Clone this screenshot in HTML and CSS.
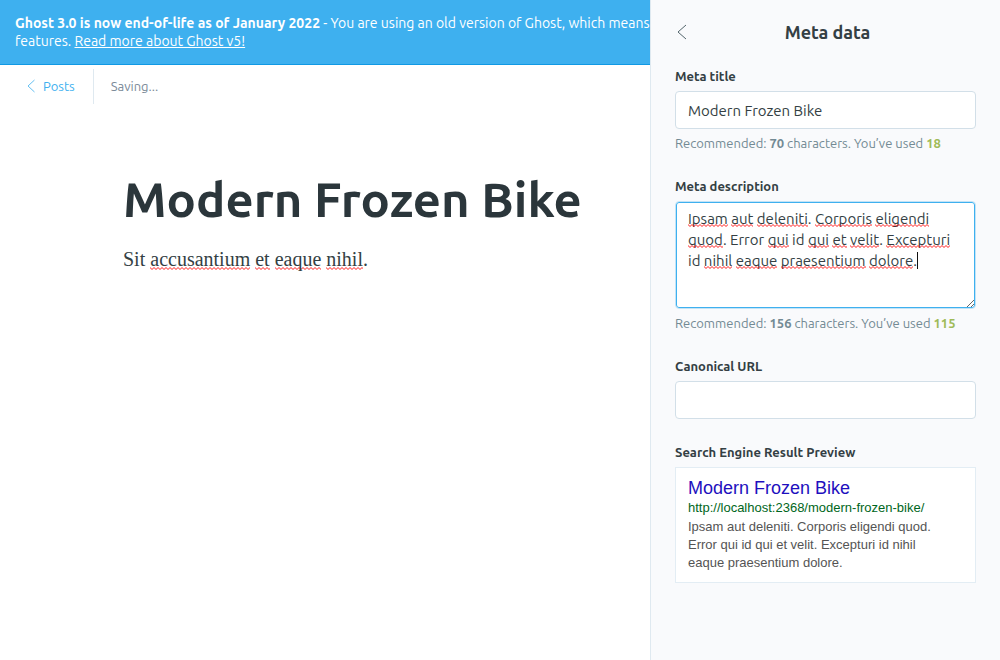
FILE: index.html
```html
<!DOCTYPE html>
<html lang="en">
<head>
<meta charset="utf-8">
<meta name="viewport" content="width=device-width, initial-scale=1">
<title>Modern Frozen Bike - Ghost</title>
<link rel="stylesheet" href="styles.css">
</head>
<body>
<div class="app">
  <aside class="banner"><strong>Ghost 3.0 is now end-of-life as of January 2022</strong> - You are using an old version of Ghost, which means you do not have access to the latest features. <a href="#upgrade">Read more about Ghost v5!</a></aside>
  <header class="editor-header">
    <a class="back-link" href="#posts">
      <svg class="back-icon" viewBox="0 0 8 14" aria-hidden="true"><path d="M7.500 1 1 7l6.500 6"/></svg>
      Posts
    </a>
    <span class="status">Saving...</span>
  </header>
  <main class="editor">
    <h1 class="post-title">Modern Frozen Bike</h1>
    <p class="post-body">Sit <span class="misspelt">accusantium</span> <span class="misspelt">et</span> <span class="misspelt">eaque</span> <span class="misspelt">nihil</span>.</p>
  </main>
</div>

<section class="panel" aria-labelledby="panel-title">
  <header class="panel-header">
    <button class="panel-back" type="button" aria-label="Back">
      <svg class="panel-back-icon" viewBox="0 0 10 16" aria-hidden="true"><path d="M9 1 1 8l8 7"/></svg>
    </button>
    <h2 class="panel-title" id="panel-title">Meta data</h2>
  </header>
  <form class="panel-form">
    <div class="field">
      <label class="label" for="meta-title">Meta title</label>
      <input class="input" id="meta-title" type="text" value="Modern Frozen Bike">
      <p class="hint">Recommended: <b>70</b> characters. You’ve used <b class="count">18</b></p>
    </div>
    <div class="field">
      <label class="label" for="meta-description">Meta description</label>
      <div class="textarea-wrap">
        <textarea class="textarea" id="meta-description" spellcheck="false">Ipsam aut deleniti. Corporis eligendi quod. Error qui id qui et velit. Excepturi id nihil eaque praesentium dolore.</textarea>
        <div class="spelling" aria-hidden="true"><span class="misspelt">Ipsam</span> <span class="misspelt">aut</span> <span class="misspelt">deleniti</span>. <span class="misspelt">Corporis</span> <span class="misspelt">eligendi</span> <span class="misspelt">quod</span>. Error <span class="misspelt">qui</span> id <span class="misspelt">qui</span> <span class="misspelt">et</span> <span class="misspelt">velit</span>. <span class="misspelt">Excepturi</span> id <span class="misspelt">nihil</span> <span class="misspelt">eaque</span> <span class="misspelt">praesentium</span> <span class="misspelt">dolore</span>.<span class="caret"></span></div>
      </div>
      <p class="hint">Recommended: <b>156</b> characters. You’ve used <b class="count">115</b></p>
    </div>
    <div class="field">
      <label class="label" for="canonical-url">Canonical URL</label>
      <input class="input" id="canonical-url" type="text">
    </div>
    <div class="field">
      <h3 class="label">Search Engine Result Preview</h3>
      <div class="preview">
        <div class="preview-title">Modern Frozen Bike</div>
        <div class="preview-link">http://localhost:2368/modern-frozen-bike/</div>
        <div class="preview-text">Ipsam aut deleniti. Corporis eligendi quod. Error qui id qui et velit. Excepturi id nihil eaque praesentium dolore.</div>
      </div>
    </div>
  </form>
</section>
</body>
</html>
```

FILE: styles.css
```css
*, *::before, *::after {
  box-sizing: border-box;
}

body {
  margin: 0;
  background: #fff;
  color: #343f44;
  font: 14px/18px Ubuntu, "Noto Sans", "Open Sans", sans-serif;
}

h1, h2, h3, p {
  margin: 0;
}

.app {
  display: flex;
  flex-direction: column;
  min-height: 100vh;
}

.banner {
  min-height: 65px;
  padding: 14px 110px 14px 15px;
  border-bottom: 1px solid #1199e4;
  background: #3eb0ef;
  color: #fff;
}

.banner a {
  color: inherit;
}

.editor-header {
  display: flex;
  align-items: center;
  padding: 4px 27px;
  font-size: 13px;
}

.back-link {
  display: flex;
  align-items: center;
  gap: 8px;
  height: 35px;
  padding: 0 18px 2px 0;
  border-right: 1px solid #dfe9f0;
  color: #3eb0ef;
  text-decoration: none;
}

.back-icon {
  width: 8px;
  height: 14px;
  fill: none;
  stroke: currentColor;
  stroke-width: 0.8;
}

.status {
  padding: 0 0 2px 17px;
  color: #7c8b9a;
}

.editor {
  padding: 63px 373px 40px 123px;
}

.post-title {
  color: #2b363b;
  font-size: 49px;
  font-weight: 700;
  line-height: 56px;
  white-space: nowrap;
}

.post-body {
  margin-top: 16px;
  font: 20px/32px "Liberation Serif", serif;
}

.misspelt {
  background: url("data:image/svg+xml,%3Csvg xmlns='http://www.w3.org/2000/svg' width='4' height='3'%3E%3Cpath d='M-1 1.500 0 .5 2 2.500 4 .5 5 1.500' fill='none' stroke='red' stroke-width='.9'/%3E%3C/svg%3E") left bottom repeat-x;
}

.panel {
  position: fixed;
  top: 0;
  right: 0;
  bottom: 0;
  width: 350px;
  overflow-y: auto;
  padding: 20px 24px;
  border-left: 1px solid #dfe9f0;
  background: #f9fafc;
}

.panel-header {
  display: grid;
  grid-template-columns: 16px 1fr 12px;
  align-items: center;
}

.panel-back {
  display: flex;
  padding: 4px 2px;
  border: 0;
  background: none;
}

.panel-back-icon {
  width: 10px;
  height: 16px;
  fill: none;
  stroke: #54666d;
}

.panel-title {
  font-size: 18px;
  line-height: 24px;
  text-align: center;
}

.panel-form {
  display: flex;
  flex-direction: column;
  gap: 24px;
  margin-top: 23px;
}

.label {
  display: block;
  margin-bottom: 6px;
  font-size: 13px;
  font-weight: 700;
  line-height: 18px;
}

.input, .textarea {
  display: block;
  width: 100%;
  margin: 0;
  border: 1px solid #d2dfe8;
  border-radius: 4px;
  background: #fff;
  color: inherit;
  font: 15px/21px Ubuntu, "Noto Sans", "Open Sans", sans-serif;
}

.input {
  height: 38px;
  padding: 0 12px;
}

.textarea-wrap {
  position: relative;
}

.textarea {
  height: 108px;
  padding: 6px 12px;
  border-color: #c3e3f6;
  outline: 0;
  box-shadow: inset 0 0 0 1px #3eb0ef;
  resize: vertical;
}

.spelling {
  position: absolute;
  inset: 0;
  padding: 7px 13px;
  color: transparent;
  font: 15px/21px Ubuntu, "Noto Sans", "Open Sans", sans-serif;
  pointer-events: none;
}

.caret {
  border-left: 1px solid #111;
}

.hint {
  margin-top: 5px;
  color: #738a94;
  font-size: 13px;
  line-height: 19px;
}

.count {
  color: #9fbb58;
}

.preview {
  padding: 10px 12px;
  border: 1px solid #e3edf4;
  background: #fff;
  color: #545454;
  font: 13px/18px "Liberation Sans", Arial, sans-serif;
}

.preview-title {
  color: #1e0fbe;
  font-size: 18px;
  line-height: 21px;
}

.preview-link {
  color: #006621;
}

.preview-text {
  padding: 1px 20px 0 0;
}
```
